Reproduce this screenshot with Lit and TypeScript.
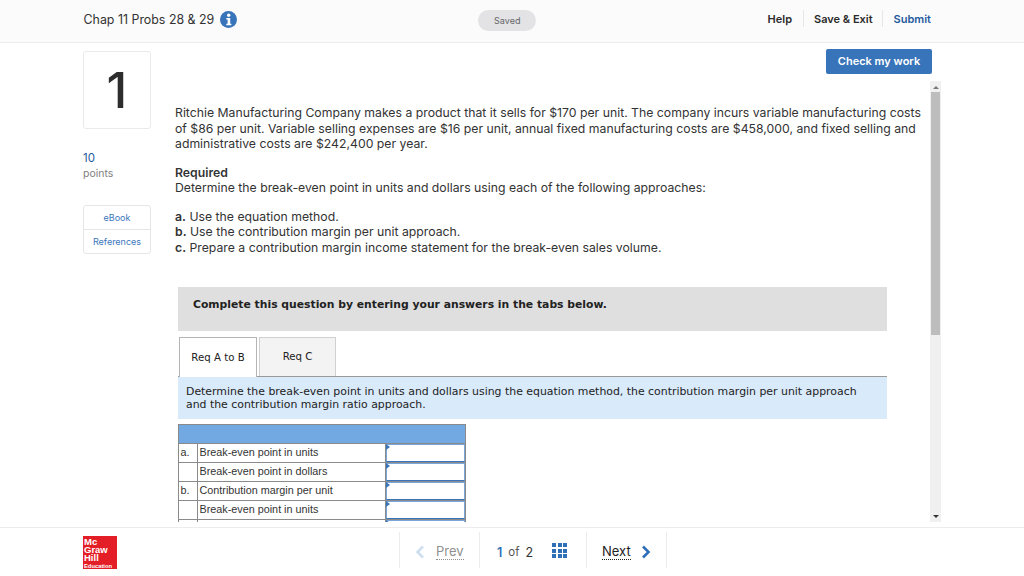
import { LitElement, html, css } from "lit";
import { customElement } from "lit/decorators.js";

@customElement("app-root")
export class AppRoot extends LitElement {
  static styles = css`
    :host { display: block; width: 1024px; height: 576px; overflow: hidden; background: #fff; color: #2d2d2d;
      font-family: "Inter", "Lato", sans-serif; }
    * { box-sizing: border-box; }
    .page { display: flex; flex-direction: column; height: 576px; }
    header { height: 43px; flex: none; background: #fbfbfb; border-bottom: 1px solid #ececec;
      display: grid; grid-template-columns: 1fr auto 1fr; align-items: center; padding: 0 93px 3px 83.5px; }
    .title { display: flex; align-items: center; gap: 6px; font-size: 12.4px; color: #333; }
    .info { width: 17px; height: 17px; display: block; }
    .saved { width: 58px; height: 21px; margin-top: 2px; border-radius: 11px; background: #e3e3e6; color: #666; font-size: 9px;
      display: flex; align-items: center; justify-content: center; }
    .nav { display: flex; justify-content: flex-end; align-items: center; margin: 0 -1px 2px 0; font-size: 11px; font-weight: 600; }
    .nav span { display: flex; align-items: center; height: 17px; padding: 0 10px; border-right: 1px solid #e6e6e6; color: #2a2a2a; }
    .nav span:first-child { padding-right: 11px; }
    .nav span:nth-child(2) { padding-right: 9px; }
    .nav span:last-child { border-right: 0; padding: 0 1px 0 11px; color: #1f5a9e; }
    .middle { flex: 1; min-height: 0; display: flex; padding: 0 92px 5px 83px; }
    .left { width: 68px; flex: none; padding-top: 8px; }
    .num { width: 68px; height: 78px; border: 1px solid #eaeaea; border-radius: 3px; display: flex; align-items: center;
      justify-content: center; font-size: 50px; font-weight: 500; line-height: 1; color: #2d2d2d; padding-bottom: 1px; }
    .points-n { margin-top: 22px; font-size: 11.5px; line-height: 15px; color: #1f5a9e; }
    .points-l { margin-top: 1px; font-size: 10.5px; line-height: 13px; color: #808080; }
    .links { margin-top: 25px; width: 68px; border: 1px solid #e6e6e6; border-radius: 3px; font-size: 9px; color: #3a76bc; text-align: center; }
    .links div { height: 23px; display: flex; align-items: center; justify-content: center; }
    .links div + div { height: 24px; border-top: 1px solid #e6e6e6; }
    .right { flex: 1; min-width: 0; display: flex; flex-direction: column; padding-left: 24px; }
    .actions { flex: none; height: 38px; padding-top: 6px; display: flex; justify-content: flex-end; }
    .check { width: 106px; height: 25px; padding-bottom: 2px; border-radius: 2px; background: #3874b9; color: #fff; font-size: 11px; font-weight: 600;
      display: flex; align-items: center; justify-content: center; }
    .scrollwrap { flex: 1; min-height: 0; display: flex; margin-right: -9px; }
    .content { flex: 1; min-width: 0; overflow: hidden; padding-top: 24px; font-size: 12.25px; line-height: 15.5px; color: #333; }
    p { margin: 0; }
    .intro { width: 752px; }
    .req { margin-top: 13px; }
    .req b, .steps b { font-weight: 600; }
    .steps { margin-top: 13px; }
    .box { margin: 32px 0 0 3px; width: 709px; height: 44px; background: #dfdfdf; display: flex; align-items: center; padding: 0 0 9px 15px;
      font-family: "DejaVu Sans", sans-serif; font-size: 10.8px; font-weight: 700; color: #222; }
    .tabs { margin: 6px 0 0 3px; display: flex; gap: 2px; width: 709px; height: 40px; padding-left: 1px; border-bottom: 1px solid #9a9a9a; font-family: "DejaVu Sans", sans-serif; font-size: 10.2px; color: #222; }
    .tab { height: 40px; display: flex; align-items: center; justify-content: center; border: 1px solid #b5b5b5; border-bottom: 0; }
    .tab.on { width: 78px; background: #fff; }
    .tab.off { width: 77px; height: 39px; background: #f3f3f3; border-color: #d0d0d0; }
    .inst { margin-left: 3px; width: 709px; height: 42px; background: #d9eafa; padding: 9px 8px 0; font-family: "DejaVu Sans", sans-serif;
      font-size: 10.9px; line-height: 12.5px; color: #222; }
    table { margin: 5px 0 0 3px; width: 288px; border-collapse: separate; border-spacing: 0; table-layout: fixed; font-family: "Liberation Sans", sans-serif; font-size: 10.8px; color: #333;
      border-left: 1px solid #8a8a8a; border-top: 1px solid #8a8a8a; }
    td { height: 19px; border-right: 1px solid #8a8a8a; border-bottom: 1px solid #8a8a8a; padding: 0 0 0 1.5px; white-space: nowrap; }
    td.a { width: 19px; }
    td.l { width: 188px; }
    tr.h td { background: #73a9e3; height: 19px; border-right: 0; }
    tr.h td:last-child { border-right: 1px solid #8a8a8a; }
    td.in { padding: 0; }
    .field { display: block; height: 18px; border: 1px solid #7aa5d8; border-bottom-color: #3874b9; background: #fff; position: relative; }
    .field::before { content: ""; position: absolute; left: -1px; top: -1px; border-left: 4px solid #3874b9; border-top: 3px solid transparent; border-bottom: 3px solid transparent; }
    .bar { width: 11px; flex: none; background: #f0f0f0; position: relative; padding: 11px 1px; }
    .thumb { width: 9px; height: 243px; background: #bdbdbd; }
    .up, .down { position: absolute; left: 2.5px; width: 0; height: 0; border-left: 3px solid transparent; border-right: 3px solid transparent; }
    .up { top: 5px; border-bottom: 3px solid #777; }
    .down { bottom: 4px; border-top: 3px solid #333; }
    footer { height: 49px; flex: none; border-top: 1px solid #ececec; display: flex; align-items: flex-start; padding: 8px 0 0 83px; }
    .logo { width: 34px; height: 33px; display: block; }
    .logo text { fill: #fff; font-family: "Liberation Sans", sans-serif; font-weight: 700; font-size: 9.5px; }
    .logo .small { font-size: 5.8px; }
    .pager { margin: -4px 0 0 282px; height: 36px; display: flex; border-left: 1px solid #ececec; color: #333; font-size: 13px; }
    .cell { border-right: 1px solid #ececec; display: flex; align-items: center; padding-top: 4px; }
    .prev { width: 80px; padding-left: 15px; gap: 11px; color: #8f8f8f; }
    .mid { width: 107px; padding-left: 17px; font-size: 12.5px; }
    .mid b { color: #2f6fb8; font-weight: 600; }
    .of { margin: 0 6px; font-size: 11.5px; color: #555; }
    .next { width: 80px; padding-left: 15px; gap: 10px; color: #222; }
    .u { border-bottom: 1px dotted currentColor; line-height: 15px; }
    .grid { margin: -3px 0 0 19px; display: grid; grid-template-columns: repeat(3, 4px); grid-auto-rows: 4px; gap: 1.5px; }
    .grid span { background: #2f6fb8; }
    svg { display: block; }
  `;
  render() {
    return html`<div class="page">
      <header>
        <div class="title">Chap 11 Probs 28 &amp; 29
          <svg class="info" viewBox="0 0 17 17"><circle cx="8.5" cy="8.5" r="8.5" fill="#3874b9"/><circle cx="8.7" cy="4.3" r="1.7" fill="#fff"/><path d="M6.3 7h3.9v5.8h1.2v1.4H6.3v-1.4h1.3V8.4H6.3z" fill="#fff"/></svg>
        </div>
        <div class="saved">Saved</div>
        <div class="nav"><span>Help</span><span>Save &amp; Exit</span><span>Submit</span></div>
      </header>
      <div class="middle">
        <aside class="left">
          <div class="num">1</div>
          <div class="points-n">10</div>
          <div class="points-l">points</div>
          <div class="links"><div>eBook</div><div>References</div></div>
        </aside>
        <div class="right">
          <div class="actions"><div class="check">Check my work</div></div>
          <div class="scrollwrap">
            <div class="content">
              <p class="intro">Ritchie Manufacturing Company makes a product that it sells for $170 per unit. The company incurs variable manufacturing costs of $86 per unit. Variable selling expenses are $16 per unit, annual fixed manufacturing costs are $458,000, and fixed selling and administrative costs are $242,400 per year.</p>
              <p class="req"><b>Required</b><br>Determine the break-even point in units and dollars using each of the following approaches:</p>
              <p class="steps"><b>a.</b> Use the equation method.<br><b>b.</b> Use the contribution margin per unit approach.<br><b>c.</b> Prepare a contribution margin income statement for the break-even sales volume.</p>
              <div class="box">Complete this question by entering your answers in the tabs below.</div>
              <div class="tabs"><div class="tab on">Req A to B</div><div class="tab off">Req C</div></div>
              <div class="inst">Determine the break-even point in units and dollars using the equation method, the contribution margin per unit approach and the contribution margin ratio approach.</div>
              <table>
                <tr class="h"><td class="a"></td><td class="l"></td><td></td></tr>
                <tr><td>a.</td><td>Break-even point in units</td><td class="in"><span class="field"></span></td></tr>
                <tr><td></td><td>Break-even point in dollars</td><td class="in"><span class="field"></span></td></tr>
                <tr><td>b.</td><td>Contribution margin per unit</td><td class="in"><span class="field"></span></td></tr>
                <tr><td></td><td>Break-even point in units</td><td class="in"><span class="field"></span></td></tr>
                <tr><td></td><td></td><td class="in"><span class="field"></span></td></tr>
              </table>
            </div>
            <div class="bar"><span class="up"></span><div class="thumb"></div><span class="down"></span></div>
          </div>
        </div>
      </div>
      <footer>
        <svg class="logo" viewBox="0 0 34 33"><rect width="34" height="33" fill="#e41e26"/>
          <text><tspan x="1" y="9">Mc</tspan><tspan x="1" y="17">Graw</tspan><tspan x="1" y="25">Hill</tspan><tspan class="small" x="1" y="32">Education</tspan></text></svg>
        <div class="pager">
          <div class="cell prev">
            <svg width="10" height="14" viewBox="0 0 10 14"><path d="M8 1.5 2.5 7 8 12.5" fill="none" stroke="#cfdff1" stroke-width="2.6"/></svg>
            <span class="u">Prev</span></div>
          <div class="cell mid"><b>1</b><span class="of">of</span>2
            <div class="grid">${Array.from({ length: 9 }, () => html`<span></span>`)}</div></div>
          <div class="cell next"><span class="u">Next</span>
            <svg width="10" height="14" viewBox="0 0 10 14"><path d="M2 1.5 7.5 7 2 12.5" fill="none" stroke="#2f6fb8" stroke-width="2.6"/></svg></div>
        </div>
      </footer>
    </div>`;
  }
}
